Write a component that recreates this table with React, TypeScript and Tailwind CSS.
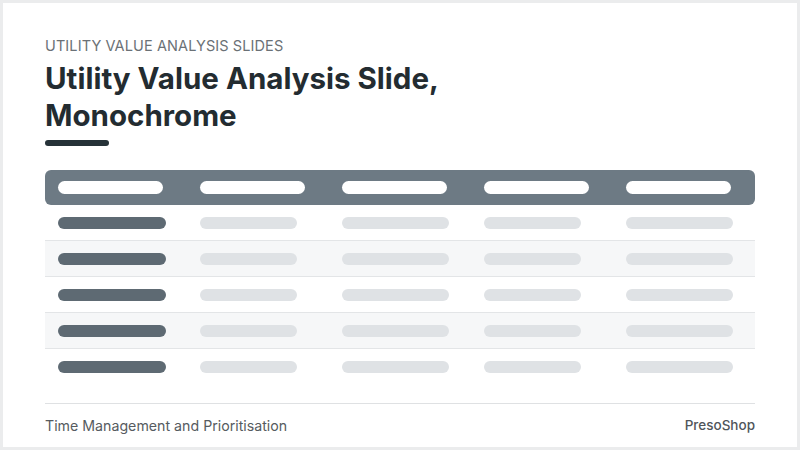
const widths = [108, 97, 107, 97, 107];
const rows = [0, 1, 2, 3, 4];

export default function App() {
  return (
    <div
      className="w-[800px] h-[450px] border-[3px] border-[#ebeced] bg-white flex flex-col px-[42px] pt-[33px]"
      style={{ fontFamily: "Inter, 'Noto Sans', sans-serif" }}
    >
      {/* Header */}
      <p className="text-[14.5px] leading-[20px] text-[#6b7176] tracking-[0.1px]">UTILITY VALUE ANALYSIS SLIDES</p>
      <h1 className="mt-[4px] text-[29.5px] leading-[37px] font-bold text-[#232c31]">
        Utility Value Analysis Slide,
        <br />
        Monochrome
      </h1>
      <div className="mt-[6px] h-[6px] w-[64px] rounded-full bg-[#263238]" />

      {/* Table */}
      <div className="mt-[24px]">
        <div className="h-[35px] rounded-[6px] bg-[#6d7a84] grid grid-cols-5 items-center">
          {widths.map((_, i) => (
            <div key={i} className="pl-[13px]">
              <div className="h-[13px] w-[105px] rounded-full bg-white" />
            </div>
          ))}
        </div>
        {rows.map((r) => (
          <div
            key={r}
            className={`h-[36px] grid grid-cols-5 items-center ${r < 4 ? "border-b border-[#e3e5e7]" : ""} ${
              r % 2 === 1 ? "bg-[#f6f7f8]" : "bg-white"
            }`}
          >
            {widths.map((w, i) => (
              <div key={i} className="pl-[13px]">
                <div
                  className={`h-[12px] rounded-full ${i === 0 ? "bg-[#5e6a73]" : "bg-[#dfe2e5]"}`}
                  style={{ width: w }}
                />
              </div>
            ))}
          </div>
        ))}
      </div>

      {/* Footer */}
      <div className="flex-1" />
      <div className="h-[44px] border-t border-[#dfe1e3] flex items-center justify-between text-[#565b60]">
        <span className="text-[14.2px]">Time Management and Prioritisation</span>
        <span className="text-[13.5px] font-medium text-[#4f555a]">PresoShop</span>
      </div>
    </div>
  );
}
